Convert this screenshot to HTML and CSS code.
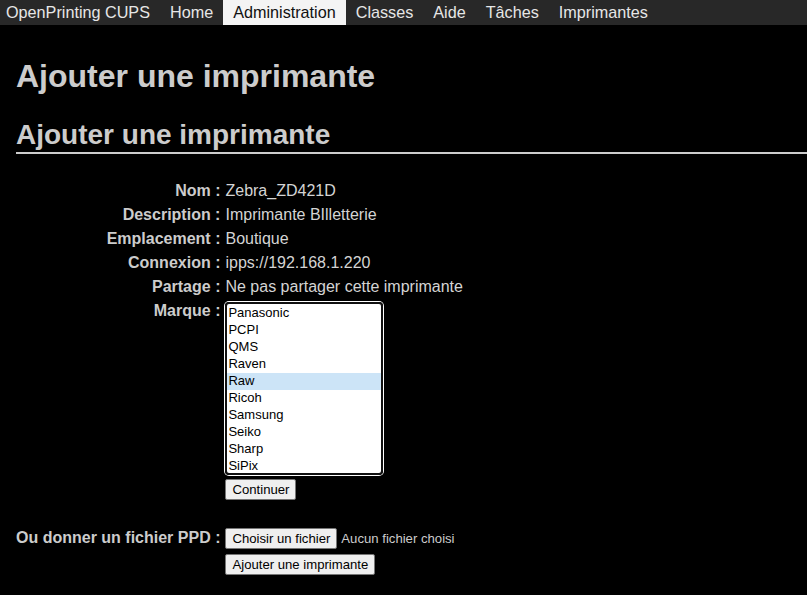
FILE: index.html
```html
<!DOCTYPE html>
<html lang="fr">
<head>
<meta charset="utf-8">
<title>Ajouter une imprimante - CUPS</title>
<link rel="stylesheet" href="styles.css">
</head>
<body>

<ul class="header">
  <li><a href="/">OpenPrinting CUPS</a></li>
  <li><a href="/">Home</a></li>
  <li><a class="active" href="/admin">Administration</a></li>
  <li><a href="/classes/">Classes</a></li>
  <li><a href="/help/">Aide</a></li>
  <li><a href="/jobs/">Tâches</a></li>
  <li><a href="/printers/">Imprimantes</a></li>
</ul>

<div class="body">
  <h1>Ajouter une imprimante</h1>
  <h2 class="title">Ajouter une imprimante</h2>

  <form method="post" action="/admin">
    <table class="form">
      <tr><th>Nom&nbsp;:</th><td>Zebra_ZD421D</td></tr>
      <tr><th>Description&nbsp;:</th><td>Imprimante BIlletterie</td></tr>
      <tr><th>Emplacement&nbsp;:</th><td>Boutique</td></tr>
      <tr><th>Connexion&nbsp;:</th><td>ipps://192.168.1.220</td></tr>
      <tr><th>Partage&nbsp;:</th><td>Ne pas partager cette imprimante</td></tr>
      <tr class="top">
        <th>Marque&nbsp;:</th>
        <td>
          <select name="PPD_MAKE" size="10" class="makes">
            <option>Panasonic</option>
            <option>PCPI</option>
            <option>QMS</option>
            <option>Raven</option>
            <option selected>Raw</option>
            <option>Ricoh</option>
            <option>Samsung</option>
            <option>Seiko</option>
            <option>Sharp</option>
            <option>SiPix</option>
            <option>Sony</option>
            <option>Star</option>
            <option>Tektronix</option>
            <option>Toshiba</option>
            <option>Xerox</option>
            <option>Zebra</option>
          </select>
          <button type="submit" class="btn next">Continuer</button>
        </td>
      </tr>
      <tr class="ppd">
        <th>Ou donner un fichier PPD&nbsp;:</th>
        <td><button type="button" class="btn">Choisir un fichier</button><span class="nofile">Aucun fichier choisi</span></td>
      </tr>
      <tr class="last">
        <th></th>
        <td><button type="submit" class="btn">Ajouter une imprimante</button></td>
      </tr>
    </table>
  </form>
</div>

</body>
</html>
```

FILE: styles.css
```css
body {
  margin: 0;
  background-color: #000;
  color: #ccc;
  font-family: "Liberation Sans", Arial, sans-serif;
  font-size: 16px;
}

.header {
  list-style-type: none;
  margin: 0;
  padding: 0 0 0 6px;
  height: 25px;
  display: flex;
  background-color: #282828;
}

.header li:first-child a {
  padding-left: 0;
}

.header li a {
  display: block;
  padding: 0 10px;
  line-height: 25px;
  font-size: 16.2px;
  color: #e6e6e6;
  text-decoration: none;
}

.header li a.active {
  background-color: #f4f4f4;
  color: #111;
}

.body {
  padding: 0 0 0 16px;
}

h1 {
  margin: 35px 0 0;
  font-size: 32px;
  line-height: 32px;
}

h2.title {
  margin: 28px 0 0;
  padding-bottom: 3px;
  font-size: 28px;
  line-height: 29px;
  border-bottom: 2px solid #ccc;
}

form {
  margin: 25px 0 0;
}

table.form {
  border-collapse: separate;
  border-spacing: 0;
}

table.form th {
  padding: 3px 4px 3px 0;
  text-align: right;
  font-weight: bold;
  line-height: 18px;
  white-space: nowrap;
}

table.form td {
  padding: 3px 1px;
  line-height: 18px;
  color: #d4d4d4;
}

table.form tr.top th,
table.form tr.top td {
  vertical-align: top;
}

table.form tr.ppd th,
table.form tr.ppd td {
  padding-top: 25px;
  vertical-align: baseline;
}

table.form tr.last td {
  padding-top: 2px;
}

select.makes {
  display: block;
  box-sizing: border-box;
  width: 158px;
  height: 173px;
  margin: 0;
  padding: 1px 0 0;
  border: 2px solid #111;
  border-radius: 4px;
  box-shadow: 0 0 0 1px #fff;
  background-color: #fff;
  color: #000;
  font-family: "Liberation Sans", Arial, sans-serif;
  font-size: 13px;
  scrollbar-width: none;
  outline: none;
}

select.makes option {
  padding: 0 1px;
  line-height: 17px;
  height: 17px;
}

select.makes option:checked {
  background: #cce4f7 linear-gradient(#cce4f7, #cce4f7);
  color: #000;
}

.btn {
  margin: 0;
  padding: 1px 6px;
  font-family: "Liberation Sans", Arial, sans-serif;
  font-size: 13.15px;
  color: #000;
  background-color: #efefef;
  border: 1px solid #767676;
  border-radius: 2px;
  line-height: 17px;
}

.btn.next {
  margin-top: 4px;
}

.nofile {
  margin-left: 4px;
  font-size: 13.15px;
  color: #ccc;
}
```
